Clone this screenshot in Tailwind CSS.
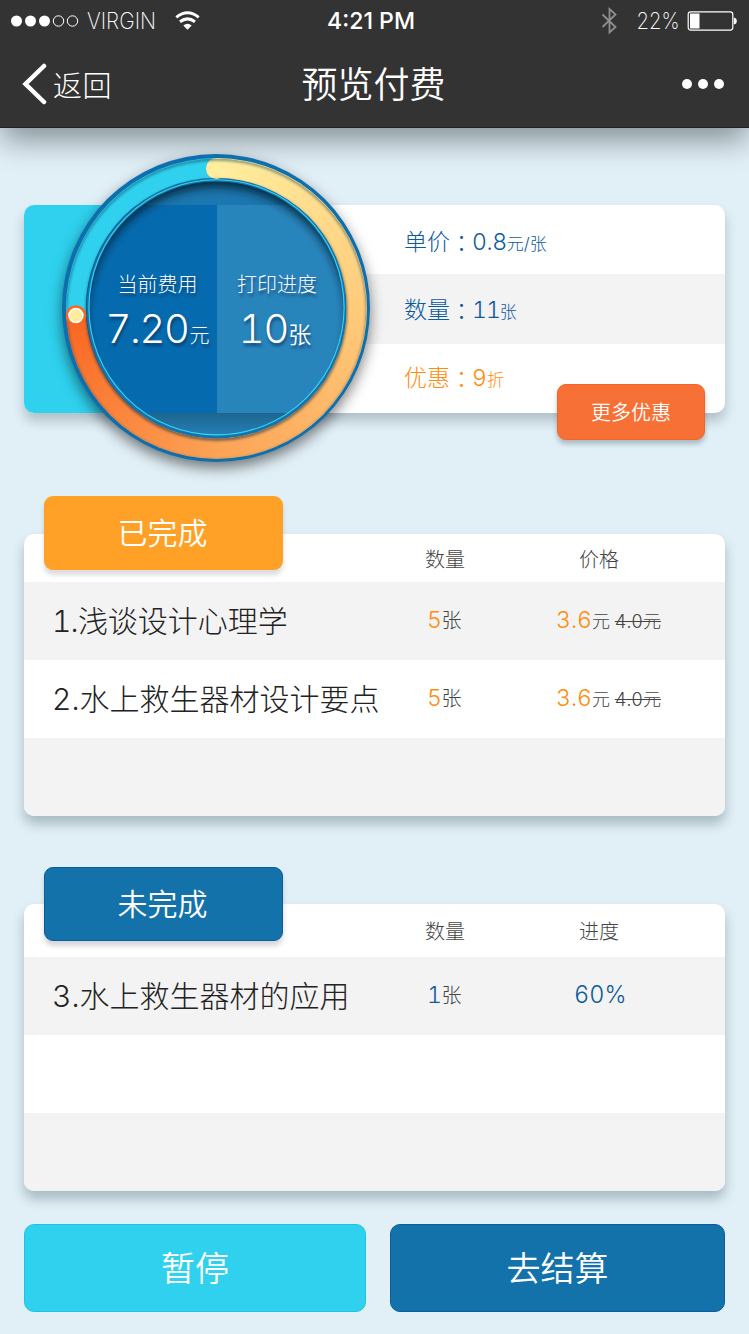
<!DOCTYPE html>
<html lang="zh-CN">
<head>
<meta charset="utf-8">
<title>预览付费</title>
<script src="https://cdn.jsdelivr.net/npm/@tailwindcss/browser@4"></script>
</head>
<body class="w-[749px] h-[1334px] overflow-hidden bg-[#e1eff6] font-['Inter','Noto_Sans_CJK_SC',sans-serif] font-light text-[#222]">
<header class="relative h-32 bg-[#333] text-white border-b border-[#222] shadow-[0_14px_28px_-2px_rgba(0,15,20,0.42)]">
  <div class="h-[41px] grid grid-cols-3 items-center pl-[11px] pr-[12px]">
    <div class="flex items-center">
      <svg class="w-[68px] h-[12px]" viewBox="0 0 68 12" fill="#fff"><circle cx="5.500" cy="6" r="5.500"/><circle cx="19.500" cy="6" r="5.500"/><circle cx="33.500" cy="6" r="5.500"/><g fill="none" stroke="#fff"><circle cx="47.500" cy="6" r="5.200"/><circle cx="61.500" cy="6" r="5.200"/></g></svg>
      <svg class="ml-[6px] w-[76px] h-[30px] overflow-visible" viewBox="0 0 76 30"><text x="2" y="23" textLength="69" lengthAdjust="spacingAndGlyphs" class="font-['Inter'] font-extralight text-[23px]" fill="#fff">VIRGIN</text></svg>
      <svg class="ml-[14px] w-[25px] h-[20px]" viewBox="0 0 25 20" fill="none" stroke="#fff" stroke-width="3"><path d="M1.300 6.300Q12.500-2.700 23.700 6.300"/><path d="M5 10.700Q12.500 5 20 10.700"/><path d="M8.300 14.600Q12.500 11 16.700 14.600L12.500 18.700Z" fill="#fff" stroke="none"/></svg>
    </div>
    <div class="text-center"><svg class="inline w-[98px] h-[30px] overflow-visible" viewBox="0 0 98 30"><text x="2" y="23" textLength="88" lengthAdjust="spacingAndGlyphs" class="font-['Inter'] font-medium text-[23.500px]" fill="#fff">4:21 PM</text></svg></div>
    <div class="flex items-center justify-end">
      <svg class="w-[16px] h-[28px] mr-[18px]" viewBox="0 0 16 28" fill="none" stroke="#8f8f8f" stroke-width="1.800"><path d="M1.500 7.500L14.500 20L8.500 25.500V2L14.500 7.500L1.500 20"/></svg>
      <svg class="w-[48px] h-[30px] overflow-visible" viewBox="0 0 48 30"><text x="1.500" y="23" textLength="43" lengthAdjust="spacingAndGlyphs" class="font-['Inter'] font-extralight text-[23px]" fill="#fff">22%</text></svg>
      <svg class="ml-[4px] w-[50px] h-[20px]" viewBox="0 0 50 20"><rect x="1.200" y=".9" width="44.600" height="18.200" rx="2.500" fill="none" stroke="#fff" stroke-width="1.200"/><rect x="3" y="2.500" width="9.500" height="15" fill="#fff"/><path d="M46.800 6.500Q49.800 7 49.800 10T46.800 13.500Z" fill="#fff"/></svg>
    </div>
  </div>
  <div class="h-[86px] grid grid-cols-3 items-center pl-[22px] pr-[25px]">
    <div class="flex items-center">
      <svg class="w-[25px] h-[42px]" viewBox="0 0 25 42" fill="none" stroke="#fff" stroke-width="4.500" stroke-linecap="round" stroke-linejoin="miter"><path d="M22 3L3.500 21L22 39"/></svg>
      <span class="ml-[6px] mt-[4px] text-[29px] leading-none tracking-[0.500px]">返回</span>
    </div>
    <h1 class="text-center mt-[2px] pl-px text-[36px] leading-none font-[350] whitespace-nowrap">预览付费</h1>
    <div class="flex justify-end gap-[6px]"><i class="size-[10px] rounded-full bg-white"></i><i class="size-[10px] rounded-full bg-white"></i><i class="size-[10px] rounded-full bg-white"></i></div>
  </div>
</header>

<main class="px-6 pt-[77px]">
  <section class="relative h-[208px]">
    <div class="flex h-full rounded-[10px] overflow-hidden bg-white shadow-[0_8px_12px_rgba(0,30,45,0.22)]">
      <div class="w-[193px] bg-[#2fd1ee]"></div>
      <div class="flex-1 text-[23px] leading-none text-[#0d5a9c] tabular-nums">
        <div class="h-[69px] pl-[187px] pt-[3px] flex items-center"><p>单价<span class="relative top-[2px] font-['Noto_Sans_CJK_TC']" lang="zh-TW">：</span><span class="-ml-px tracking-[-0.400px]">0.8</span><span class="text-[17px]">元/张</span></p></div>
        <div class="h-[70px] pl-[187px] flex items-center bg-[#f3f3f3]"><p>数量<span class="relative top-[2px] font-['Noto_Sans_CJK_TC']" lang="zh-TW">：</span><span class="-ml-px tracking-[-1px]">11</span><span class="text-[17px]">张</span></p></div>
        <div class="h-[69px] pl-[187px] flex items-start pt-[21px] text-[#ff8c0a]"><p>优惠<span class="relative top-[2px] font-['Noto_Sans_CJK_TC']" lang="zh-TW">：</span><span class="-ml-px">9</span><span class="text-[17px]">折</span></p></div>
      </div>
    </div>
    <button class="absolute left-[533px] top-[179px] w-[148px] h-[56px] rounded-[9px] bg-[#f77035] border border-[#f6641f] pt-[2px] text-white text-[20px] font-[350] shadow-[0_4px_5px_rgba(0,30,45,0.25)]">更多优惠</button>

    <!-- Cost and progress gauge -->
    <div class="absolute left-[38px] top-[-51px] size-[308px] rounded-full bg-[#0d6fae] p-[3.500px] shadow-[0_6px_14px_rgba(0,0,0,0.5)]">
      <div class="relative size-full rounded-full bg-[conic-gradient(#ffee9e_0deg,#ffcb7b_90deg,#fca356_180deg,#f96622_267deg,#2fd1ee_267deg)] p-[20.500px]">
        <div class="relative size-full overflow-hidden rounded-full bg-[#1c76af]">
          <div class="absolute inset-x-0 top-[27px] h-[208px] grid grid-cols-[131px_129px] text-white text-center [text-shadow:1px_3px_3px_rgba(0,20,60,0.5)]">
            <div class="bg-[#066bae] pt-[70px] pl-[12px]">
              <p class="text-[20px] leading-[20px]">当前费用</p>
              <p class="mt-[14px] text-[40px] leading-[40px] font-[350] tabular-nums tracking-[-1.300px] whitespace-nowrap">7.20<span class="ml-px text-[20px] font-light tracking-normal">元</span></p>
            </div>
            <div class="bg-[#2885bc] pt-[70px] pr-[9px]">
              <p class="text-[20px] leading-[20px]">打印进度</p>
              <p class="mt-[14px] -ml-[4px] text-[40px] leading-[40px] font-[350] tabular-nums tracking-[-1.200px] whitespace-nowrap">10<span class="text-[23px] tracking-normal">张</span></p>
            </div>
          </div>
          <div class="absolute inset-x-0 top-[235px] h-[25px] bg-linear-to-b from-[#1d668f] to-[#2583bb]"></div>
        </div>
        <svg class="absolute inset-0 size-full" viewBox="0 0 301 301" fill="none">
          <defs>
            <filter id="soft" x="-10%" y="-10%" width="120%" height="120%"><feGaussianBlur stdDeviation="5"/></filter>
            <filter id="edge" x="-10%" y="-10%" width="120%" height="120%"><feGaussianBlur stdDeviation="1.500"/></filter>
            <clipPath id="disc"><circle cx="150.500" cy="150.500" r="127.500"/></clipPath>
            <clipPath id="band"><path clip-rule="evenodd" d="M0.500 150.500a150 150 0 1 0 300 0a150 150 0 1 0-300 0M20.500 150.500a130 130 0 1 1 260 0a130 130 0 1 1-260 0"/></clipPath>
          </defs>
          <g clip-path="url(#disc)">
            <path filter="url(#soft)" fill="#001c2e" fill-opacity=".85" fill-rule="evenodd" d="M-10-10H311V311H-10ZM20.500 160.500a130 131.500 0 1 0 260 0a130 131.500 0 1 0-260 0"/>
          </g>
          <circle cx="150.500" cy="150.500" r="128.500" stroke="#1473ae" stroke-width="3"/>
          <circle cx="150.500" cy="149.300" r="127.600" stroke="#35d5f0" stroke-width="1.100"/>
          <circle cx="150.500" cy="10.500" r="10.500" fill="#ffee9e"/>
          <g clip-path="url(#band)">
            <circle cx="150.500" cy="152" r="151" stroke="#123a50" stroke-opacity=".65" stroke-width="2.500" filter="url(#edge)"/>
            <circle cx="150.500" cy="152" r="129" stroke="#102a3a" stroke-opacity=".7" stroke-width="3" filter="url(#edge)"/>
          </g>
          <circle cx="9.900" cy="157.500" r="10.300" fill="#f96622"/>
          <circle cx="9.900" cy="157.500" r="7" fill="#ffec9c" stroke="#fff" stroke-width="1.500"/>
        </svg>
      </div>
    </div>
  </section>

  <section class="relative mt-[121px]">
    <div class="rounded-[10px] overflow-hidden bg-white text-[20px] leading-none text-[#444] tabular-nums shadow-[0_8px_12px_rgba(0,30,45,0.25)]">
      <div class="h-12 pt-[3px] flex items-center pl-[401px]"><span class="w-[154px]">数量</span><span>价格</span></div>
      <div class="h-[78px] flex items-center pl-[28px] bg-[#f3f3f3]">
        <span class="w-[375px] text-[30px] text-[#222]"><span class="tracking-[-0.800px]">1.</span>浅谈设计心理学</span>
        <p class="w-[129px] -mt-[2px]"><span class="text-[23px] font-[350] text-[#ff8c0a] tracking-[-0.500px]">5</span>张</p>
        <p class="-mt-px whitespace-nowrap"><span class="text-[23px] font-[350] text-[#ff8c0a]">3.6</span><span class="text-[18px]">元 <s>4.0元</s></span></p>
      </div>
      <div class="h-[78px] flex items-center pl-[28px]">
        <span class="w-[375px] text-[30px] text-[#222]">2.水上救生器材设计要点</span>
        <p class="w-[129px] -mt-[2px]"><span class="text-[23px] font-[350] text-[#ff8c0a] tracking-[-0.500px]">5</span>张</p>
        <p class="-mt-px whitespace-nowrap"><span class="text-[23px] font-[350] text-[#ff8c0a]">3.6</span><span class="text-[18px]">元 <s>4.0元</s></span></p>
      </div>
      <div class="h-[78px] bg-[#f3f3f3]"></div>
    </div>
    <h2 class="absolute left-5 -top-[38px] w-[239px] h-[74px] rounded-[9px] bg-[#ffa126] flex items-center justify-center pr-[2px] text-white text-[30px] font-[350] leading-none shadow-[0_5px_5px_rgba(0,0,30,0.14)]">已完成</h2>
  </section>

  <section class="relative mt-[88px]">
    <div class="rounded-[10px] overflow-hidden bg-white text-[20px] leading-none text-[#444] tabular-nums shadow-[0_8px_12px_rgba(0,30,45,0.25)]">
      <div class="h-[53px] pt-[3px] flex items-center pl-[401px]"><span class="w-[154px]">数量</span><span>进度</span></div>
      <div class="h-[78px] flex items-center pl-[28px] bg-[#f3f3f3]">
        <span class="w-[375px] text-[30px] text-[#222]">3.水上救生器材的应用</span>
        <p class="w-[147px] -mt-px"><span class="text-[23px] font-[350] text-[#0d5a9c] tracking-[-0.500px]">1</span>张</p>
        <p class="-mt-[2px] text-[23.500px] text-[#0d5a9c]">60%</p>
      </div>
      <div class="h-[78px]"></div>
      <div class="h-[78px] bg-[#f3f3f3]"></div>
    </div>
    <h2 class="absolute left-5 -top-[37px] w-[239px] h-[74px] rounded-[9px] bg-[#1472ab] border border-[#0a5c9c] flex items-center justify-center pr-[2px] text-white text-[30px] font-[350] leading-none shadow-[0_5px_5px_rgba(0,0,30,0.16)]">未完成</h2>
  </section>

  <div class="mt-[33px] flex gap-6 text-white text-[34px] font-[350] leading-none">
    <button class="w-[342px] h-[88px] pt-[2px] rounded-[10px] bg-[#2fd1ee] border border-[#1cc5e8]">暂停</button>
    <button class="w-[335px] h-[88px] pt-[2px] rounded-[10px] bg-[#1472ab] border border-[#0a5c9c]">去结算</button>
  </div>
</main>
</body>
</html>
